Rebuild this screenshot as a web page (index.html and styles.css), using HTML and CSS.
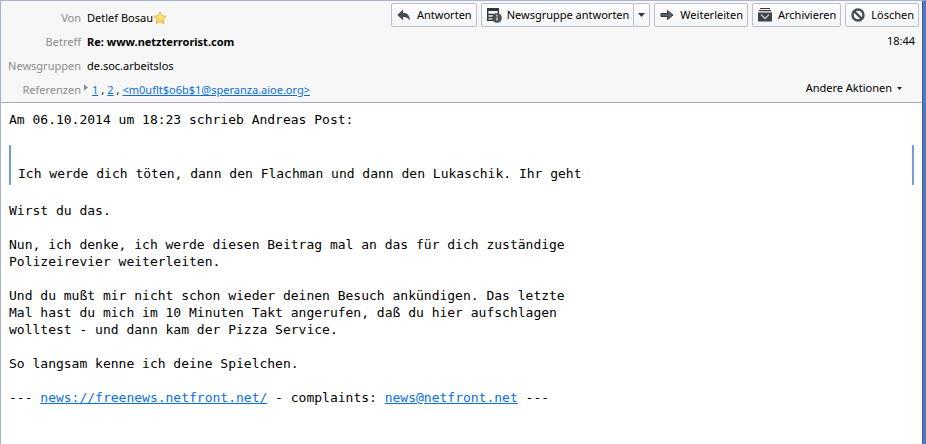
FILE: index.html
```html
<!DOCTYPE html>
<html lang="de">
<head>
  <meta charset="UTF-8" />
  <meta name="viewport" content="width=device-width, initial-scale=1.0" />
  <title>Re: www.netzterrorist.com</title>
  <link rel="stylesheet" href="styles.css">
</head>
<body>
  <div class="window">
    <header class="msg-header">
      <dl class="fields">
        <dt>Von</dt>
        <dd>Detlef Bosau<svg class="star" viewBox="0 0 14 14" aria-hidden="true">
          <defs>
            <linearGradient id="gold" x1="0" y1="0" x2="0" y2="1">
              <stop offset="0" stop-color="#fff3a0" />
              <stop offset="1" stop-color="#f9cf45" />
            </linearGradient>
          </defs>
          <path d="M7 .8l1.900 3.900 4.300.6-3.100 3 .8 4.300L7 10.500l-3.900 2.100.8-4.300-3.100-3 4.300-.6z" fill="url(#gold)" stroke="#e8b84a" stroke-width="1" stroke-linejoin="round" />
        </svg></dd>
        <dt>Betreff</dt>
        <dd class="subject">Re: www.netzterrorist.com</dd>
        <dt>Newsgruppen</dt>
        <dd>de.soc.arbeitslos</dd>
        <dt>Referenzen</dt>
        <dd class="refs">
          <svg class="twisty" viewBox="0 0 5 8" aria-hidden="true"><path d="M0 0l5 4-5 4z" fill="#8c8c8c" /></svg>
          <a href="#">1</a><span>,</span>
          <a href="#">2</a><span>,</span>
          <a href="#">&lt;m0uflt$o6b$1@speranza.aioe.org&gt;</a>
        </dd>
      </dl>

      <div class="side">
        <div class="toolbar">
          <button class="btn" type="button">
            <svg class="icon" viewBox="0 0 16 16" aria-hidden="true"><path d="M7 2.500v3.300c4.500.2 6.600 2.700 7 8-1.500-2.700-3.300-3.900-7-3.900v3.300L1.300 7.900z" fill="#464b51" /></svg>
            Antworten
          </button>
          <div class="split">
            <button class="btn" type="button">
              <svg class="icon" viewBox="0 0 16 16" aria-hidden="true">
                <path d="M1 1h12v3H1z" fill="#33373b" />
                <path d="M1.700 1.500v11.800H8M1.700 7.500h11M1.700 10.500h6M12.400 3v5" fill="none" stroke="#33373b" stroke-width="1.400" />
                <circle cx="11" cy="11" r="4.800" fill="#4b5157" />
                <path d="M11 7.800v1.600M11 10.400v3.200" stroke="#c3c8cd" stroke-width="1.600" />
              </svg>
              Newsgruppe antworten
            </button>
            <button class="btn drop" type="button" aria-label="Weitere Antwortoptionen">
              <svg class="caret" viewBox="0 0 7 4" aria-hidden="true"><path d="M0 0h7L3.500 4z" fill="#33373b" /></svg>
            </button>
          </div>
          <button class="btn" type="button">
            <svg class="icon" viewBox="0 0 16 16" aria-hidden="true"><path d="M2 6.500h6.500V3.500L14 8l-5.500 4.500V9.500H2z" fill="#5c6166" stroke="#33373b" stroke-width="1" /></svg>
            Weiterleiten
          </button>
          <button class="btn" type="button">
            <svg class="icon" viewBox="0 0 16 16" aria-hidden="true">
              <path d="M3 1.500h10M2 3.700h12" stroke="#33373b" stroke-width="1.200" />
              <path d="M1 5.500h14v9H1z" fill="#3d4247" />
              <path d="M4 7.500l4 4 4-4" fill="none" stroke="#c3c8cd" stroke-width="1.300" />
            </svg>
            Archivieren
          </button>
          <button class="btn" type="button">
            <svg class="icon" viewBox="0 0 16 16" aria-hidden="true">
              <circle cx="8" cy="8" r="5.500" fill="none" stroke="#464b51" stroke-width="2.400" />
              <path d="M4 4l8 8" stroke="#464b51" stroke-width="2.400" />
            </svg>
            Löschen
          </button>
        </div>
        <time class="time" datetime="18:44">18:44</time>
        <button class="more" type="button">
          Andere Aktionen
          <svg class="caret-small" viewBox="0 0 5 3" aria-hidden="true"><path d="M0 0h5L2.500 3z" fill="#222" /></svg>
        </button>
      </div>
    </header>

    <main class="msg-body">
      <p>Am 06.10.2014 um 18:23 schrieb Andreas Post:</p>
      <blockquote>Ich werde dich töten, dann den Flachman und dann den Lukaschik. Ihr geht</blockquote>
      <p>Wirst du das.</p>
      <p>Nun, ich denke, ich werde diesen Beitrag mal an das für dich zuständige<br>
      Polizeirevier weiterleiten.</p>
      <p>Und du mußt mir nicht schon wieder deinen Besuch ankündigen. Das letzte<br>
      Mal hast du mich im 10 Minuten Takt angerufen, daß du hier aufschlagen<br>
      wolltest - und dann kam der Pizza Service.</p>
      <p>So langsam kenne ich deine Spielchen.</p>
      <p>--- <a href="#">news://freenews.netfront.net/</a> - complaints: <a href="#">news@netfront.net</a> ---</p>
    </main>
  </div>
</body>
</html>
```

FILE: styles.css
```css
*, *::before, *::after {
  box-sizing: border-box;
}

body {
  margin: 0;
  background: #fff;
  color: #000;
  font-family: "Noto Sans", "Open Sans", sans-serif;
  font-size: 11px;
  line-height: 16px;
}

a {
  color: #0a6fdc;
  text-decoration: underline;
}

.window {
  min-height: 100vh;
  border-top: 1px solid #a9b2cf;
  border-left: 1px solid #a9b2cf;
  border-right: 3px solid #4f7abb;
  box-shadow: inset -1px 0 0 #3c5c92;
}

/* header pane */
.msg-header {
  display: flex;
  justify-content: space-between;
  margin-right: 1px;
  padding: 2px 3px 0 6px;
  background: #f7f7f7;
  border-bottom: 1px solid #a3adc9;
}

.fields {
  display: grid;
  grid-template-columns: 74px auto;
  grid-auto-rows: 24px;
  column-gap: 6px;
  align-items: center;
  margin: 0;
  padding-top: 3px;
  white-space: nowrap;
}

.fields dt {
  color: #8c8c8c;
  text-align: right;
}

.fields dd {
  display: flex;
  align-items: center;
  margin: 0;
}

.fields .subject {
  font-weight: bold;
}

.star {
  width: 14px;
  height: 14px;
}

.fields .refs {
  gap: 3px;
}

.refs .twisty {
  width: 4px;
  height: 7px;
  margin: 0 1px 5px -3px;
}

.side {
  display: flex;
  flex-direction: column;
  align-items: flex-end;
}

.toolbar {
  display: flex;
  gap: 4px;
}

.btn {
  display: flex;
  align-items: center;
  gap: 5px;
  height: 24px;
  padding: 0 4px;
  border: 1px solid #b9c0cd;
  border-radius: 2px;
  background: linear-gradient(#fdfdfe, #f4f5f7);
  color: #000;
  font: inherit;
  white-space: nowrap;
}

.btn:hover {
  background: #fff;
}

.icon {
  width: 16px;
  height: 16px;
}

.split {
  display: flex;
}

.split .drop {
  margin-left: -1px;
}

.caret {
  width: 7px;
  height: 4px;
}

.time {
  margin-top: 6px;
  padding-right: 4px;
}

.more {
  display: flex;
  align-items: center;
  gap: 5px;
  margin-top: auto;
  margin-right: 17px;
  margin-bottom: 6px;
  padding: 0;
  border: 0;
  background: none;
  color: #000;
  font: inherit;
}

.caret-small {
  width: 5px;
  height: 3px;
}

/* message text */
.msg-body {
  padding: 8px 9px 8px 8px;
  font-family: Consolas, "DejaVu Sans Mono", monospace;
  font-size: 13px;
  line-height: 17px;
}

.msg-body p {
  margin: 0 0 17px;
}

.msg-body blockquote {
  margin: 0 0 17px;
  padding: 20px 7px 3px;
  border-left: 2px solid #6f9fd3;
  border-right: 2px solid #6f9fd3;
  border-radius: 1px;
}
```
